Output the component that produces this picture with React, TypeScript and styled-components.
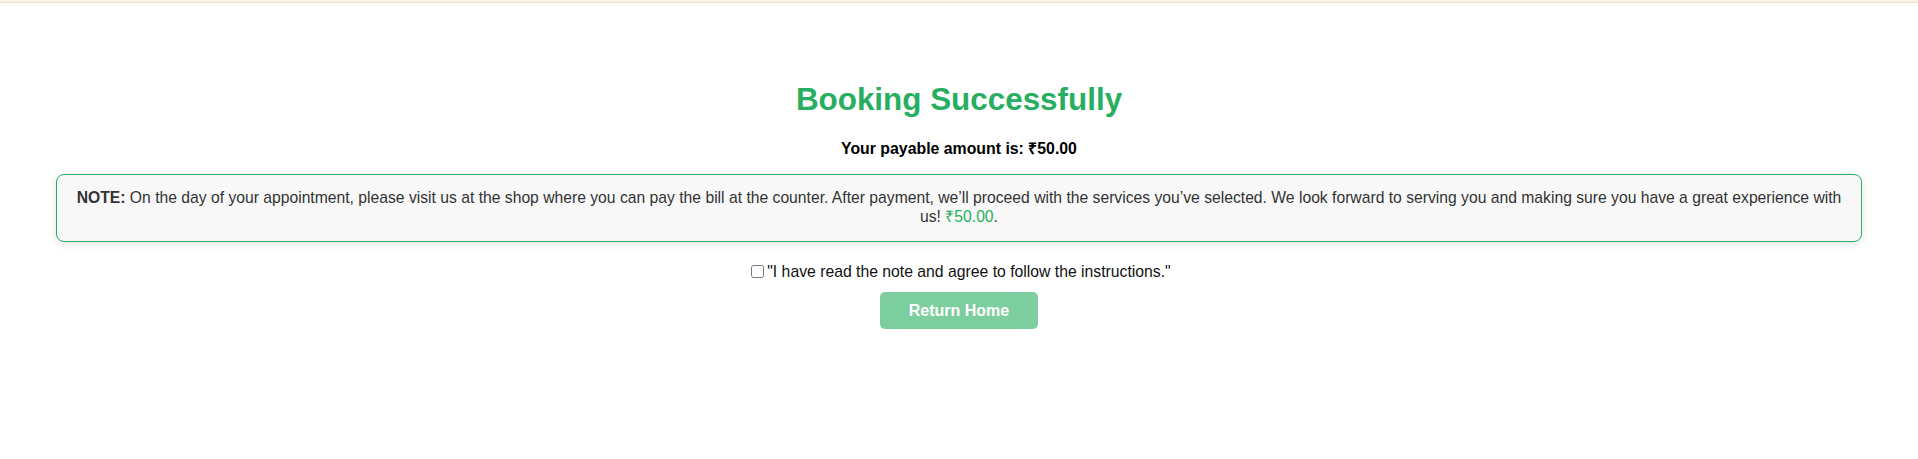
import React, { useState } from 'react';
import styled, { createGlobalStyle } from 'styled-components';

const GlobalStyle = createGlobalStyle`
  html, body {
    margin: 0;
    padding: 0;
    background: #ffffff;
    font-family: 'Liberation Sans', Arial, sans-serif;
  }
`;

const TopBar = styled.div`
  height: 2px;
  background: #fbf2e2;
  border-bottom: 1px solid #f0dfc2;
`;

const Wrapper = styled.main`
  display: flex;
  flex-direction: column;
  align-items: center;
  padding: 78px 56px 0;
  text-align: center;
`;

const Title = styled.h1`
  margin: 0;
  font-size: 31.4px;
  line-height: 37px;
  font-weight: bold;
  color: #27ae60;
`;

const Amount = styled.p`
  margin: 22px 0 0;
  font-size: 15.85px;
  line-height: 18px;
  font-weight: bold;
  color: #000;
`;

const NoteBox = styled.div`
  box-sizing: border-box;
  width: 100%;
  margin-top: 16px;
  padding: 14px 15px 15px;
  background: #f8f8f8;
  border: 1px solid #27ae60;
  border-radius: 8px;
  box-shadow: 0 2px 8px rgba(0, 0, 0, 0.12);
  font-size: 15.7px;
  line-height: 18.5px;
  color: #333;
  text-align: center;
`;

const Price = styled.span`
  color: #27ae60;
`;

const AgreeLabel = styled.label`
  display: flex;
  align-items: center;
  margin-top: 20px;
  font-size: 15.75px;
  line-height: 19px;
  color: #111;
  cursor: pointer;

  input {
    margin: 0 3px 0 4px;
    width: 13px;
    height: 13px;
  }
`;

const ReturnButton = styled.button`
  margin-top: 11px;
  padding: 9px 29px;
  border: none;
  border-radius: 5px;
  background: #27ae60;
  color: #fff;
  font-family: 'Liberation Sans', Arial, sans-serif;
  font-size: 16px;
  line-height: 19px;
  font-weight: bold;
  cursor: pointer;

  &:disabled {
    opacity: 0.6;
    cursor: not-allowed;
  }
`;

const App: React.FC = () => {
  const [agreed, setAgreed] = useState(false);
  const amount = '₹50.00';

  return (
    <>
      <GlobalStyle />
      <TopBar />
      <Wrapper>
        <Title>Booking Successfully</Title>
        <Amount>Your payable amount is: {amount}</Amount>
        <NoteBox>
          <strong>NOTE:</strong> On the day of your appointment, please visit us at the shop where you can pay
          the bill at the counter. After payment, we’ll proceed with the services you’ve selected. We look forward
          to serving you and making sure you have a great experience with us! <Price>{amount}</Price>.
        </NoteBox>
        <AgreeLabel>
          <input type="checkbox" checked={agreed} onChange={(e) => setAgreed(e.target.checked)} />
          "I have read the note and agree to follow the instructions."
        </AgreeLabel>
        <ReturnButton disabled={!agreed}>Return Home</ReturnButton>
      </Wrapper>
    </>
  );
};

export default App;
